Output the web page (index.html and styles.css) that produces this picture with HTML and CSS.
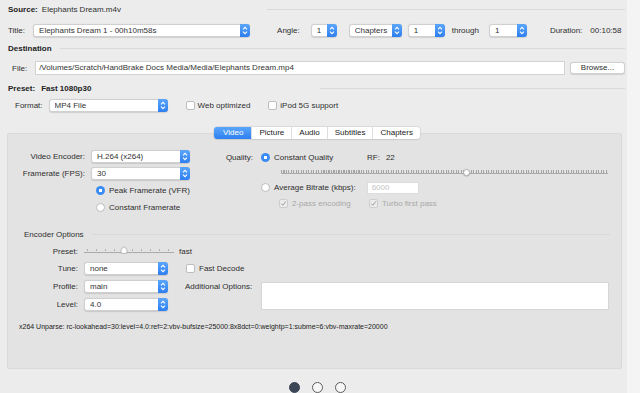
FILE: index.html
```html
<!DOCTYPE html>
<html lang="en">
<head>
  <meta charset="UTF-8" />
  <title>HandBrake - Video</title>
  <link rel="stylesheet" href="styles.css">
</head>
<body>
  <div class="window">
    <div class="main">

      <div class="top">
        <div class="row r-source">
          <b>Source:</b><span class="source-name">Elephants Dream.m4v</span>
          <span class="sep sep-source"></span>
        </div>

        <div class="row r-title">
          <span class="lbl">Title:</span>
          <div class="popup pop-title"><span class="val">Elephants Dream 1 - 00h10m58s</span><span class="stepper"><svg width="6" height="9" viewBox="0 0 6 9"><path d="M1 3.3 L3 1.3 L5 3.3 M1 5.7 L3 7.7 L5 5.7" fill="none" stroke="#fff" stroke-width="1.1"/></svg></span></div>
          <span class="lbl lbl-angle">Angle:</span>
          <div class="popup pop-angle"><span class="val">1</span><span class="stepper"><svg width="6" height="9" viewBox="0 0 6 9"><path d="M1 3.3 L3 1.3 L5 3.3 M1 5.7 L3 7.7 L5 5.7" fill="none" stroke="#fff" stroke-width="1.1"/></svg></span></div>
          <div class="popup pop-chapters"><span class="val">Chapters</span><span class="stepper"><svg width="6" height="9" viewBox="0 0 6 9"><path d="M1 3.3 L3 1.3 L5 3.3 M1 5.7 L3 7.7 L5 5.7" fill="none" stroke="#fff" stroke-width="1.1"/></svg></span></div>
          <div class="popup pop-from"><span class="val">1</span><span class="stepper"><svg width="6" height="9" viewBox="0 0 6 9"><path d="M1 3.3 L3 1.3 L5 3.3 M1 5.7 L3 7.7 L5 5.7" fill="none" stroke="#fff" stroke-width="1.1"/></svg></span></div>
          <span class="lbl lbl-through">through</span>
          <div class="popup pop-to"><span class="val">1</span><span class="stepper"><svg width="6" height="9" viewBox="0 0 6 9"><path d="M1 3.3 L3 1.3 L5 3.3 M1 5.7 L3 7.7 L5 5.7" fill="none" stroke="#fff" stroke-width="1.1"/></svg></span></div>
          <span class="lbl lbl-duration">Duration:</span>
          <span class="duration">00:10:58</span>
        </div>

        <div class="row r-dest">
          <b>Destination</b>
          <span class="sep sep-dest"></span>
        </div>

        <div class="row r-file">
          <span class="lbl lbl-file">File:</span>
          <div class="field file-field">/Volumes/Scratch/HandBrake Docs Media/Media/Elephants Dream.mp4</div>
          <div class="button">Browse...</div>
        </div>

        <div class="row r-preset">
          <b>Preset:</b><b class="preset-name">Fast 1080p30</b>
          <span class="sep sep-preset"></span>
        </div>

        <div class="row r-format">
          <span class="lbl lbl-format">Format:</span>
          <div class="popup pop-format"><span class="val">MP4 File</span><span class="stepper"><svg width="6" height="9" viewBox="0 0 6 9"><path d="M1 3.3 L3 1.3 L5 3.3 M1 5.7 L3 7.7 L5 5.7" fill="none" stroke="#fff" stroke-width="1.1"/></svg></span></div>
          <span class="check chk-web"></span><span class="check-text">Web optimized</span>
          <span class="check chk-ipod"></span><span class="check-text">iPod 5G support</span>
        </div>
      </div>

      <div class="tabs">
        <span class="tab active">Video</span>
        <span class="tab">Picture</span>
        <span class="tab">Audio</span>
        <span class="tab">Subtitles</span>
        <span class="tab">Chapters</span>
      </div>

      <div class="tabbox">
        <div class="video-cols">
          <div class="video-left">
            <span class="glabel">Video Encoder:</span>
            <div class="popup"><span class="val">H.264 (x264)</span><span class="stepper"><svg width="6" height="9" viewBox="0 0 6 9"><path d="M1 3.3 L3 1.3 L5 3.3 M1 5.7 L3 7.7 L5 5.7" fill="none" stroke="#fff" stroke-width="1.1"/></svg></span></div>
            <span class="glabel">Framerate (FPS):</span>
            <div class="popup"><span class="val">30</span><span class="stepper"><svg width="6" height="9" viewBox="0 0 6 9"><path d="M1 3.3 L3 1.3 L5 3.3 M1 5.7 L3 7.7 L5 5.7" fill="none" stroke="#fff" stroke-width="1.1"/></svg></span></div>
            <span></span>
            <div class="opt"><span class="radio on"></span><span>Peak Framerate (VFR)</span></div>
            <span></span>
            <div class="opt"><span class="radio"></span><span>Constant Framerate</span></div>
          </div>

          <div class="video-right">
            <div class="q-row">
              <span class="q-label">Quality:</span>
              <span class="radio on"></span>
              <span class="q-const">Constant Quality</span>
              <span class="rf">RF:</span><span class="rf-val">22</span>
            </div>
            <div class="q-slider-row">
              <div class="q-slider"><span class="q-knob"></span></div>
            </div>
            <div class="q-row q-bitrate">
              <span class="radio"></span>
              <span class="q-avg">Average Bitrate (kbps):</span>
              <div class="field bitrate-field">6000</div>
            </div>
            <div class="q-row q-pass">
              <span class="check disabled"><svg width="7" height="7" viewBox="0 0 7 7"><path d="M1.2 3.6 L2.8 5.3 L5.8 1.4" fill="none" stroke="#9d9d9d" stroke-width="1"/></svg></span>
              <span class="dim pass-text">2-pass encoding</span>
              <span class="check disabled"><svg width="7" height="7" viewBox="0 0 7 7"><path d="M1.2 3.6 L2.8 5.3 L5.8 1.4" fill="none" stroke="#9d9d9d" stroke-width="1"/></svg></span>
              <span class="dim">Turbo first pass</span>
            </div>
          </div>
        </div>

        <div class="enc-head">
          <span>Encoder Options</span>
          <span class="sep sep-enc"></span>
        </div>

        <div class="enc-grid">
          <span class="elabel">Preset:</span>
          <div class="preset-cell">
            <div class="p-slider">
              <svg class="p-knob" width="8" height="8" viewBox="0 0 8 8"><path d="M1 3.5 L4 0.7 L7 3.5 L7 7.3 L1 7.3 Z" fill="#fff" stroke="#a8a8a8" stroke-width="0.8"/></svg>
            </div>
            <span class="fast">fast</span>
          </div>

          <span class="elabel">Tune:</span>
          <div class="popup pop-enc"><span class="val">none</span><span class="stepper"><svg width="6" height="9" viewBox="0 0 6 9"><path d="M1 3.3 L3 1.3 L5 3.3 M1 5.7 L3 7.7 L5 5.7" fill="none" stroke="#fff" stroke-width="1.1"/></svg></span></div>
          <div class="opt fast-decode"><span class="check"></span><span>Fast Decode</span></div>

          <span class="elabel">Profile:</span>
          <div class="popup pop-enc"><span class="val">main</span><span class="stepper"><svg width="6" height="9" viewBox="0 0 6 9"><path d="M1 3.3 L3 1.3 L5 3.3 M1 5.7 L3 7.7 L5 5.7" fill="none" stroke="#fff" stroke-width="1.1"/></svg></span></div>
          <span class="add-label">Additional Options:</span>
          <div class="field add-field"></div>

          <span class="elabel">Level:</span>
          <div class="popup pop-enc"><span class="val">4.0</span><span class="stepper"><svg width="6" height="9" viewBox="0 0 6 9"><path d="M1 3.3 L3 1.3 L5 3.3 M1 5.7 L3 7.7 L5 5.7" fill="none" stroke="#fff" stroke-width="1.1"/></svg></span></div>
        </div>

        <div class="unparse">x264 Unparse: rc-lookahead=30:level=4.0:ref=2:vbv-bufsize=25000:8x8dct=0:weightp=1:subme=6:vbv-maxrate=20000</div>
      </div>

      <div class="pager">
        <span class="dot current"></span>
        <span class="dot"></span>
        <span class="dot"></span>
      </div>
    </div>
    <div class="strip"></div>
  </div>
</body>
</html>
```

FILE: styles.css
```css
* {
  box-sizing: border-box;
  margin: 0;
  padding: 0;
}

body {
  font-family: "Liberation Sans", Arial, sans-serif;
  font-size: 8px;
  color: #2e2e2e;
  background-color: #ececec;
}

.window {
  display: flex;
  width: 640px;
  height: 393px;
  overflow: hidden;
}

.main {
  width: 627px;
  display: flex;
  flex-direction: column;
}

.strip {
  flex: 1;
  background-color: #f4f4f5;
}

b {
  font-weight: bold;
  color: #222;
}

/* ---------- top area ---------- */

.top {
  padding: 2px 2px 0 8px;
}

.row {
  display: flex;
  align-items: center;
  height: 14px;
  white-space: nowrap;
}

.sep {
  height: 1px;
  background-color: #d9d9d9;
}

.source-name {
  margin-left: 4px;
}

.sep-source {
  margin-left: auto;
  width: 358px;
}

.r-title {
  margin-top: 7px;
}

.popup {
  display: flex;
  align-items: center;
  height: 13px;
  padding-left: 5px;
  background-color: #fff;
  border: 1px solid #d0d0d0;
  border-radius: 3px;
  box-shadow: 0 0.5px 1px rgba(0, 0, 0, 0.12);
  color: #333;
}

.popup .val {
  flex: 1;
  overflow: hidden;
  white-space: nowrap;
}

.stepper {
  display: flex;
  align-items: center;
  justify-content: center;
  width: 10px;
  height: 13px;
  margin: -1px -1px -1px 0;
  background: linear-gradient(#5ba6fb, #2d7ff0);
  border-radius: 0 3px 3px 0;
}

.pop-title {
  margin-left: 8px;
  width: 217px;
}

.lbl-angle {
  margin-left: 27px;
}

.pop-angle {
  margin-left: 11px;
  width: 26px;
}

.pop-chapters {
  margin-left: 12px;
  width: 53px;
}

.pop-from {
  margin-left: 6px;
  width: 37px;
}

.lbl-through {
  margin-left: 7px;
}

.pop-to {
  margin-left: 10px;
  width: 38px;
}

.lbl-duration {
  margin-left: 23px;
}

.duration {
  margin-left: 8px;
}

.r-dest {
  margin-top: 4px;
}

.sep-dest {
  flex: 1;
  margin-left: 8px;
}

.r-file {
  margin-top: 6px;
}

.lbl-file {
  margin-left: 4px;
}

.field {
  background-color: #fff;
  border: 1px solid #d3d3d3;
  color: #333;
}

.file-field {
  margin-left: 8px;
  width: 530px;
  height: 14px;
  line-height: 12px;
  padding-left: 3px;
}

.button {
  margin-left: 5px;
  width: 55px;
  height: 12px;
  line-height: 10px;
  text-align: center;
  background-color: #fff;
  border: 1px solid #d0d0d0;
  border-radius: 3px;
  box-shadow: 0 0.5px 1px rgba(0, 0, 0, 0.12);
}

.r-preset {
  margin-top: 6px;
}

.preset-name {
  margin-left: 6px;
}

.sep-preset {
  margin-left: auto;
  width: 305px;
}

.r-format {
  margin-top: 3px;
}

.lbl-format {
  margin-left: 7px;
}

.pop-format {
  margin-left: 6px;
  width: 119px;
}

.check {
  display: inline-flex;
  align-items: center;
  justify-content: center;
  width: 9px;
  height: 9px;
  background-color: #fff;
  border: 1px solid #bdbdbd;
  border-radius: 2px;
  flex-shrink: 0;
}

.check-text {
  margin-left: 3px;
}

.chk-web {
  margin-left: 18px;
}

.chk-ipod {
  margin-left: 18px;
}

/* ---------- tabs ---------- */

.tabs {
  display: flex;
  align-self: center;
  margin: 15px 0 -6px 7px;
  height: 12px;
  background-color: #fff;
  border-radius: 3px;
  box-shadow: 0 0 0 0.5px #c9c9c9, 0 1px 1px rgba(0, 0, 0, 0.1);
  position: relative;
  z-index: 1;
}

.tab {
  height: 12px;
  line-height: 12px;
  padding: 0 7px;
  border-left: 1px solid #dedede;
  color: #222;
}

.tab:first-child {
  border-left: none;
}

.tab.active {
  color: #fff;
  background: linear-gradient(#5ba6fb, #2d7ff0);
  border-radius: 3px 0 0 3px;
  padding: 0 8px 0 9px;
}

.tabbox {
  margin: 0 5px 0 7px;
  padding: 13px 0 27px;
  background-color: #e3e3e3;
  border: 1px solid #dadada;
  border-radius: 2px;
}

/* ---------- video settings ---------- */

.video-cols {
  display: flex;
}

.video-left {
  display: grid;
  grid-template-columns: 77px 99px;
  grid-template-rows: 18px 17px 16px 18px;
  column-gap: 6px;
  align-items: center;
}

.glabel {
  text-align: right;
  white-space: nowrap;
}

.opt {
  display: flex;
  align-items: center;
  gap: 4px;
  padding-left: 5px;
  white-space: nowrap;
}

.radio {
  display: inline-block;
  width: 9px;
  height: 9px;
  border-radius: 50%;
  background-color: #fff;
  border: 1px solid #bcbcbc;
  flex-shrink: 0;
}

.radio.on {
  border: none;
  background: radial-gradient(circle, #fff 0 1.6px, #3a8cf3 1.9px);
}

.video-right {
  margin-left: 30px;
  display: flex;
  flex-direction: column;
}

.q-row {
  display: flex;
  align-items: center;
  height: 20px;
  white-space: nowrap;
}

.q-label {
  width: 33px;
  text-align: right;
  margin-right: 8px;
}

.q-const {
  margin-left: 4px;
  width: 93px;
}

.rf-val {
  margin-left: 6px;
}

.q-slider-row {
  height: 10px;
  display: flex;
  align-items: center;
}

.q-slider {
  position: relative;
  margin-left: 61px;
  width: 327px;
  height: 4px;
  border-bottom: 1px solid #a9a9a9;
  background: repeating-linear-gradient(90deg, #a3a3a3 0 1px, transparent 1px 2.5px);
}

.q-knob {
  position: absolute;
  left: 182px;
  top: -1px;
  width: 7px;
  height: 7px;
  border-radius: 50%;
  background-color: #fff;
  border: 1px solid #b3b3b3;
  box-shadow: 0 0.5px 1px rgba(0, 0, 0, 0.2);
}

.q-bitrate {
  height: 21px;
  padding-left: 41px;
}

.q-avg {
  margin-left: 4px;
}

.bitrate-field {
  margin-left: 11px;
  width: 52px;
  height: 12px;
  line-height: 10px;
  padding-left: 4px;
  color: #c2c2c2;
  border-color: #dcdcdc;
}

.q-pass {
  height: 11px;
  padding-left: 59px;
}

.check.disabled {
  border-color: #cdcdcd;
  background-color: #ececec;
}

.dim {
  color: #a8a8a8;
  margin-left: 4px;
}

.pass-text {
  width: 77px;
}

/* ---------- encoder options ---------- */

.enc-head {
  display: flex;
  align-items: center;
  height: 14px;
  margin-top: 11px;
  padding-left: 16px;
}

.sep-enc {
  margin-left: 8px;
  width: 518px;
}

.enc-grid {
  display: grid;
  grid-template-columns: 76px 101px 76px 348px;
  grid-template-rows: 16px 18px 18px 18px;
  align-items: center;
  margin-top: 2px;
}

.elabel {
  grid-column: 1;
  text-align: right;
  padding-right: 6px;
}

.preset-cell {
  grid-column: 2 / 5;
  display: flex;
  align-items: center;
}

.p-slider {
  position: relative;
  width: 90px;
  height: 4px;
  border-bottom: 1px solid #ababab;
  background: repeating-linear-gradient(90deg, #b0b0b0 0 1px, transparent 1px 9px);
  background-size: 100% 2px;
  background-repeat: no-repeat;
  background-position: 3px 0;
}

.p-knob {
  position: absolute;
  left: 36px;
  top: -3px;
}

.fast {
  margin-left: 5px;
}

.pop-enc {
  grid-column: 2;
  width: 84px;
}

.fast-decode {
  grid-column: 3;
  padding-left: 1px;
}

.add-label {
  grid-column: 3;
  white-space: nowrap;
}

.add-field {
  grid-column: 4;
  grid-row: 3 / 5;
  align-self: start;
  margin-top: 5px;
  height: 28px;
  border-color: #d6d6d6;
}

.unparse {
  height: 28px;
  line-height: 28px;
  padding-left: 11px;
  white-space: nowrap;
  font-size: 7px;
  color: #222;
}

/* ---------- pager ---------- */

.pager {
  display: flex;
  justify-content: center;
  gap: 12px;
  margin: 13px 0 0 7px;
}

.dot {
  width: 11px;
  height: 11px;
  border-radius: 50%;
  border: 1px solid #5c5c5c;
  background-color: #f7f7f7;
}

.dot.current {
  border-color: #3b4657;
  background-color: #3b4657;
}
```
